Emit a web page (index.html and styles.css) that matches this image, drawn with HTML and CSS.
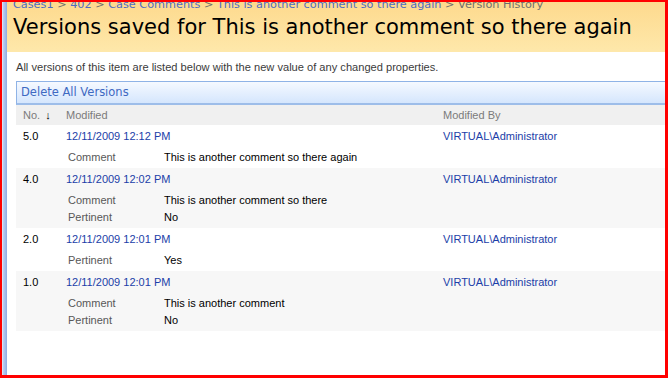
FILE: index.html
```html
<!DOCTYPE html>
<html lang="en">
<head>
    <meta charset="UTF-8">
    <title>Version History</title>
    <link rel="stylesheet" href="styles.css">
</head>
<body>
    <div class="page">
        <div class="side-strip"></div>
        <div class="main">
            <div class="title-area">
                <div class="crumbs">
                    <a href="#">Cases1</a> &gt; <a href="#">402</a> &gt; <a href="#">Case Comments</a> &gt; <a href="#">This is another comment so there again</a> &gt; <span class="current">Version History</span>
                </div>
                <h1>Versions saved for This is another comment so there again</h1>
            </div>

            <div class="content">
                <p class="desc">All versions of this item are listed below with the new value of any changed properties.</p>

                <div class="toolbar">
                    <a href="#">Delete All Versions</a>
                </div>

                <div class="versions">
                    <div class="head-row">
                        <span>No. <span class="sort-arrow">&#8595;</span></span>
                        <span>Modified</span>
                        <span>Modified By</span>
                    </div>

                    <div class="version">
                        <div class="version-main">
                            <span class="num">5.0</span>
                            <a href="#" class="link">12/11/2009 12:12 PM</a>
                            <a href="#" class="link">VIRTUAL\Administrator</a>
                        </div>
                        <div class="props">
                            <span class="label">Comment</span><span>This is another comment so there again</span>
                        </div>
                    </div>

                    <div class="version alt">
                        <div class="version-main">
                            <span class="num">4.0</span>
                            <a href="#" class="link">12/11/2009 12:02 PM</a>
                            <a href="#" class="link">VIRTUAL\Administrator</a>
                        </div>
                        <div class="props">
                            <span class="label">Comment</span><span>This is another comment so there</span>
                            <span class="label">Pertinent</span><span>No</span>
                        </div>
                    </div>

                    <div class="version">
                        <div class="version-main">
                            <span class="num">2.0</span>
                            <a href="#" class="link">12/11/2009 12:01 PM</a>
                            <a href="#" class="link">VIRTUAL\Administrator</a>
                        </div>
                        <div class="props">
                            <span class="label">Pertinent</span><span>Yes</span>
                        </div>
                    </div>

                    <div class="version alt">
                        <div class="version-main">
                            <span class="num">1.0</span>
                            <a href="#" class="link">12/11/2009 12:01 PM</a>
                            <a href="#" class="link">VIRTUAL\Administrator</a>
                        </div>
                        <div class="props">
                            <span class="label">Comment</span><span>This is another comment</span>
                            <span class="label">Pertinent</span><span>No</span>
                        </div>
                    </div>
                </div>
            </div>
        </div>
    </div>

    <div class="frame"></div>
</body>
</html>
```

FILE: styles.css
```css
* {
    box-sizing: border-box;
    margin: 0;
    padding: 0;
}

html, body {
    height: 100%;
}

body {
    background: #fff;
    font-family: "DejaVu Sans", Verdana, sans-serif;
    font-size: 11px;
    color: #000;
    overflow: hidden;
}

a {
    text-decoration: none;
}

.page {
    display: flex;
    min-height: 100%;
    padding-left: 2px;
}

.side-strip {
    width: 5px;
    flex-shrink: 0;
    background: linear-gradient(to right, #e6edf9 0%, #b9ccef 30%, #8eabe3 100%);
}

.main {
    flex: 1;
    min-width: 0;
}

/* page title */
.title-area {
    height: 52px;
    padding-left: 6px;
    background: linear-gradient(#fdd98c, #fee8ab);
    overflow: hidden;
}

.crumbs {
    margin-top: -2px;
    line-height: 14px;
    font-size: 11.25px;
    color: #6e6e6e;
    white-space: nowrap;
}

.crumbs a {
    color: #4d6cc4;
}

.crumbs .current {
    color: #6e6e6e;
}

.title-area h1 {
    margin-top: 3px;
    font-weight: normal;
    font-size: 21px;
    line-height: 24px;
    color: #000;
    white-space: nowrap;
}

/* list */
.content {
    padding-left: 9px;
}

.desc {
    padding-top: 9px;
    height: 29px;
    font-family: "Liberation Sans", Arial, sans-serif;
    font-size: 11.1px;
    color: #3b3b3b;
}

.toolbar {
    height: 24px;
    padding-left: 4px;
    border-top: 1px solid #8fb3e6;
    border-left: 1px solid #8fb3e6;
    border-bottom: 2px solid #9dbde9;
    background: linear-gradient(#f5f9ff, #d5e6fd);
    line-height: 20px;
    font-size: 11.5px;
}

.toolbar a {
    color: #3e69c2;
}

.versions {
    font-family: "Liberation Sans", Arial, sans-serif;
    font-size: 11px;
}

.head-row,
.version-main {
    display: grid;
    grid-template-columns: 43px 377px 1fr;
    padding-left: 7px;
    white-space: nowrap;
}

.head-row {
    height: 20px;
    line-height: 20px;
    background: #f0f0f0;
    color: #7b7b7b;
}

.sort-arrow {
    color: #000;
    margin-left: 2px;
}

.version {
    padding: 3px 0 2px;
}

.version.alt {
    background: #f7f7f7;
}

.version-main {
    line-height: 16px;
}

.link {
    color: #1b3ea8;
}

.props {
    display: grid;
    grid-template-columns: 96px 1fr;
    padding: 5px 0 0 52px;
    line-height: 17px;
}

.label {
    color: #585858;
}

/* screenshot outline */
.frame {
    position: fixed;
    inset: 0;
    border-style: solid;
    border-color: #ff0000;
    border-width: 2px 3px 3px 2px;
    pointer-events: none;
}
```
